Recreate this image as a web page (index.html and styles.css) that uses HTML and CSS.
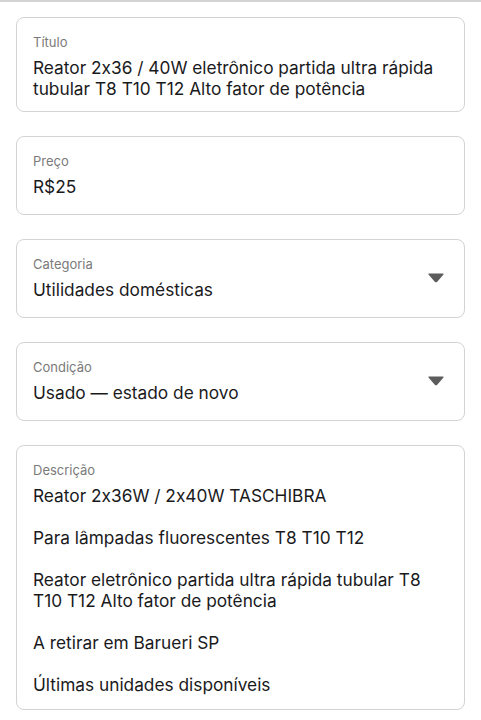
FILE: index.html
```html
<!DOCTYPE html>
<html lang="pt">
<head>
<meta charset="utf-8">
<link rel="stylesheet" href="styles.css">
</head>
<body>
<div class="page">
  <div class="field title">
    <div class="label">Título</div>
    <div class="value">Reator 2x36 / 40W eletrônico partida ultra rápida tubular T8 T10 T12 Alto fator de potência</div>
  </div>
  <div class="field">
    <div class="label">Preço</div>
    <div class="value">R$25</div>
  </div>
  <div class="field select">
    <div class="content">
      <div class="label">Categoria</div>
      <div class="value">Utilidades domésticas</div>
    </div>
    <svg class="caret" width="16" height="10" viewBox="0 0 16 10"><path d="M1 1 H15 L8.8 8.3 Q8 9.1 7.2 8.3 Z" fill="#5c5c5c" stroke="#5c5c5c" stroke-width="1.2" stroke-linejoin="round"/></svg>
  </div>
  <div class="field select">
    <div class="content">
      <div class="label">Condição</div>
      <div class="value">Usado — estado de novo</div>
    </div>
    <svg class="caret" width="16" height="10" viewBox="0 0 16 10"><path d="M1 1 H15 L8.8 8.3 Q8 9.1 7.2 8.3 Z" fill="#5c5c5c" stroke="#5c5c5c" stroke-width="1.2" stroke-linejoin="round"/></svg>
  </div>
  <div class="field desc">
    <div class="label">Descrição</div>
    <p class="para">Reator 2x36W / 2x40W TASCHIBRA</p>
    <p class="para">Para lâmpadas fluorescentes T8 T10 T12</p>
    <p class="para">Reator eletrônico partida ultra rápida tubular T8 T10 T12 Alto fator de potência</p>
    <p class="para">A retirar em Barueri SP</p>
    <p class="para">Últimas unidades disponíveis</p>
  </div>
  <div class="footnote">Condição</div>
</div>
</body>
</html>
```
FILE: styles.css
```css
html, body {
  margin: 0;
  padding: 0;
  background: #ffffff;
}
body {
  font-family: "Inter", "Liberation Sans", sans-serif;
  font-feature-settings: "calt" 0;
  color: #1a1a1c;
  border-top: 2px solid #d4d4d4;
}
.page {
  padding: 15px 16px 0 16px;
  display: flex;
  flex-direction: column;
  gap: 24px;
}
.field {
  border: 1px solid #d3d3d3;
  border-radius: 8px;
  padding: 16px 16px 17px 16px;
}
.field.title {
  padding-bottom: 12px;
}
.label {
  font-size: 13px;
  line-height: 16px;
  color: #7a7a7a;
}
.value {
  font-size: 17.3px;
  line-height: 21px;
  margin-top: 7px;
}
.select {
  display: flex;
  align-items: center;
}
.select .content {
  flex: 1;
}
.caret {
  margin-right: 4px;
  flex: none;
}
.desc {
  padding-bottom: 14px;
}
.desc .label {
  margin-bottom: 7px;
}
.desc .para {
  margin: 0;
  font-size: 17.3px;
  line-height: 21px;
}
.desc .para + .para {
  margin-top: 21px;
}
.footnote {
  font-size: 13px;
  line-height: 16px;
  color: #7a7a7a;
  margin-top: -16px;
  padding-left: 17px;
}
```
